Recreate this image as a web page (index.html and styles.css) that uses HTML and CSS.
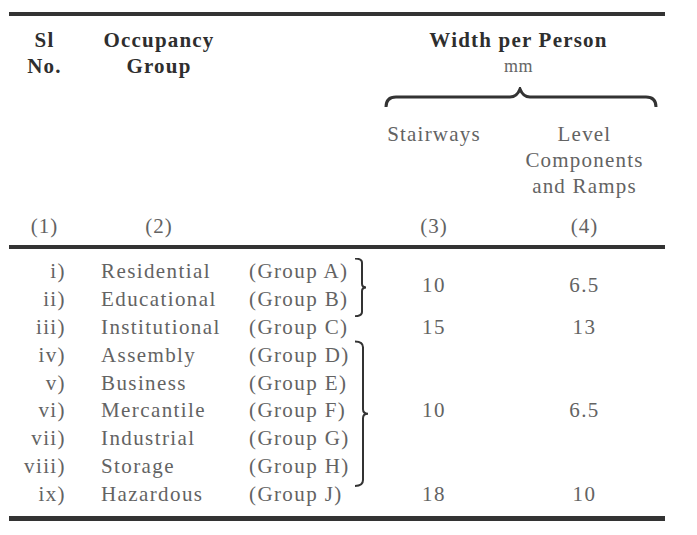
FILE: index.html
```html
<!DOCTYPE html>
<html lang="en">
<head>
<meta charset="utf-8">
<title>Width per Person</title>
<link rel="stylesheet" href="styles.css">
</head>
<body>
<div class="table">
  <div class="rule rule-top"></div>

  <div class="head">
    <div class="h-sl">Sl<br>No.</div>
    <div class="h-occ"><div class="occ-box">Occupancy<br>Group</div></div>
    <div class="h-width">
      <div class="h-title">Width per Person</div>
      <div class="h-unit">mm</div>
      <svg class="hbrace" width="275" height="22" viewBox="0 0 275 22">
        <path d="M2,20 Q2,10 12,10 L126,10 Q133,10 136,2 Q139,10 146,10 L262,10 Q272,10 272,20" fill="none" stroke="#333" stroke-width="3"/>
      </svg>
      <div class="h-sub">
        <div class="h-stair">Stairways</div>
        <div class="h-level">Level<br>Components<br>and Ramps</div>
      </div>
    </div>
  </div>

  <div class="grid colnums">
    <div class="c-a center">(1)</div>
    <div class="c-b"><div class="occ-box">(2)</div></div>
    <div class="c-e">(3)</div>
    <div class="c-f">(4)</div>
  </div>

  <div class="rule rule-mid"></div>

  <div class="grid rows">
    <div class="c-a r1">i)</div><div class="c-b r1">Residential</div><div class="c-c r1">(Group A)</div>
    <div class="c-a r2">ii)</div><div class="c-b r2">Educational</div><div class="c-c r2">(Group B)</div>
    <div class="c-a r3">iii)</div><div class="c-b r3">Institutional</div><div class="c-c r3">(Group C)</div>
    <div class="c-a r4">iv)</div><div class="c-b r4">Assembly</div><div class="c-c r4">(Group D)</div>
    <div class="c-a r5">v)</div><div class="c-b r5">Business</div><div class="c-c r5">(Group E)</div>
    <div class="c-a r6">vi)</div><div class="c-b r6">Mercantile</div><div class="c-c r6">(Group F)</div>
    <div class="c-a r7">vii)</div><div class="c-b r7">Industrial</div><div class="c-c r7">(Group G)</div>
    <div class="c-a r8">viii)</div><div class="c-b r8">Storage</div><div class="c-c r8">(Group H)</div>
    <div class="c-a r9">ix)</div><div class="c-b r9">Hazardous</div><div class="c-c r9">(Group J)</div>

    <div class="c-d span-ab">
      <svg class="vbrace vbrace1" viewBox="0 0 20 100" preserveAspectRatio="none">
        <path d="M3,1 Q10,1 10,8 L10,44 Q10,50 14,50 Q10,50 10,56 L10,92 Q10,99 3,99" fill="none" stroke="#333" stroke-width="2" vector-effect="non-scaling-stroke"/>
      </svg>
    </div>
    <div class="c-d span-dh">
      <svg class="vbrace vbrace2" viewBox="0 0 20 100" preserveAspectRatio="none">
        <path d="M3,1 Q11,1 11,5 L11,47 Q11,50 16,50 Q11,50 11,53 L11,95 Q11,99 3,99" fill="none" stroke="#333" stroke-width="2" vector-effect="non-scaling-stroke"/>
      </svg>
    </div>

    <div class="c-e span-ab">10</div><div class="c-f span-ab">6.5</div>
    <div class="c-e r3">15</div><div class="c-f r3">13</div>
    <div class="c-e span-dh">10</div><div class="c-f span-dh">6.5</div>
    <div class="c-e r9">18</div><div class="c-f r9">10</div>
  </div>

  <div class="rule rule-bot"></div>
</div>
</body>
</html>
```

FILE: styles.css
```css
html, body {
  margin: 0;
  padding: 0;
  background: #ffffff;
}

body {
  font-family: "Liberation Serif", "Times New Roman", serif;
  font-size: 21px;
  color: #636363;
}

.table {
  margin: 12px 0 0 9px;
  width: 656px;
}

.rule {
  background: #333333;
  height: 4px;
}

.rule-bot {
  height: 5px;
  margin-top: 7px;
}

/* shared columns */
.grid,
.head {
  display: grid;
  grid-template-columns: 71px 169px 103px 28px 108px 177px;
}

/* header */
.head {
  padding-top: 11px;
  font-weight: bold;
  color: #2e2e2e;
  letter-spacing: 1.2px;
}

.h-sl {
  grid-column: 1;
  text-align: center;
  line-height: 26px;
}

.h-occ {
  grid-column: 2 / 4;
  line-height: 26px;
}

.occ-box {
  margin-left: 21px;
  width: 116px;
  text-align: center;
}

.h-width {
  grid-column: 5 / 7;
  display: flex;
  flex-direction: column;
}

.h-title {
  line-height: 26px;
  text-align: center;
  padding-right: 8px;
}

.h-unit {
  font-weight: normal;
  font-size: 18px;
  line-height: 26px;
  color: #666666;
  text-align: center;
  padding-right: 8px;
  letter-spacing: 0.5px;
}

.hbrace {
  display: block;
  margin: 8px 0 0 4px;
}

.h-sub {
  display: grid;
  grid-template-columns: 108px 177px;
  margin-top: 12px;
  font-weight: normal;
  color: #636363;
  line-height: 26px;
}

.h-stair {
  text-align: center;
}

.h-level {
  padding-left: 16px;
  text-align: center;
}

/* column numbers */
.colnums {
  margin-top: 14px;
  padding-bottom: 6px;
  line-height: 26px;
  letter-spacing: 1px;
}

.center { text-align: center; }

/* body rows */
.rows {
  grid-template-rows: repeat(9, 27.9px);
  padding-top: 9px;
  line-height: 27.9px;
  letter-spacing: 1.4px;
}

.c-a {
  grid-column: 1;
  text-align: right;
  padding-right: 14px;
}

.colnums .c-a {
  text-align: center;
  padding-right: 0;
}

.c-b {
  grid-column: 2;
  padding-left: 21px;
}

.colnums .c-b {
  padding-left: 0;
}

.c-c { grid-column: 3; white-space: nowrap; }
.c-d { grid-column: 4; position: relative; }

.c-e {
  grid-column: 5;
  text-align: center;
}

.c-f {
  grid-column: 6;
  padding-left: 16px;
  text-align: center;
}

.rows .c-e,
.rows .c-f {
  align-self: center;
}

.r1 { grid-row: 1; }
.r2 { grid-row: 2; }
.r3 { grid-row: 3; }
.r4 { grid-row: 4; }
.r5 { grid-row: 5; }
.r6 { grid-row: 6; }
.r7 { grid-row: 7; }
.r8 { grid-row: 8; }
.r9 { grid-row: 9; }

.span-ab { grid-row: 1 / 3; }
.span-dh { grid-row: 4 / 9; }

.vbrace {
  position: absolute;
  left: 0;
  width: 20px;
}

.vbrace1 {
  top: 0;
  height: calc(100% + 3px);
}

.vbrace2 {
  top: -2px;
  height: calc(100% + 8px);
}
```
